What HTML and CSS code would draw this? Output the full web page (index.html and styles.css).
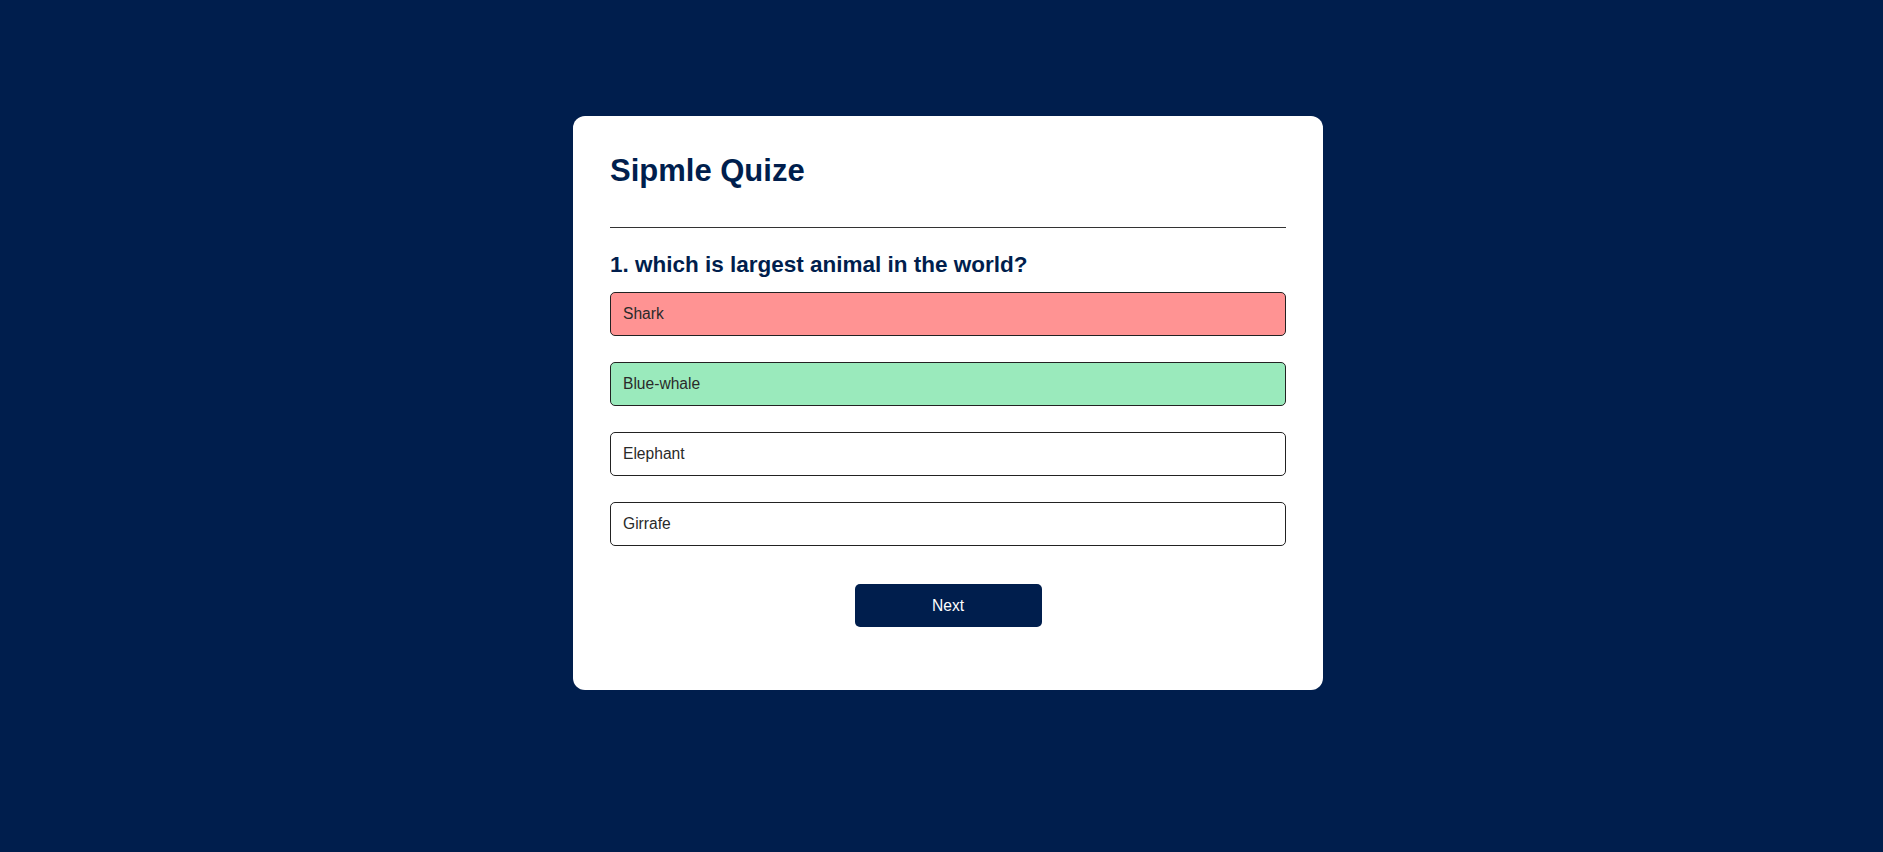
FILE: index.html
```html
<!DOCTYPE html>
<html lang="en">
<head>
<meta charset="utf-8">
<title>Simple Quiz</title>
<link rel="stylesheet" href="styles.css">
</head>
<body>
  <div class="app">
    <h1 class="title">Sipmle Quize</h1>
    <div class="quiz">
      <h2 class="question">1. which is largest animal in the world?</h2>
      <div class="answers">
        <button class="btn incorrect">Shark</button>
        <button class="btn correct">Blue-whale</button>
        <button class="btn">Elephant</button>
        <button class="btn">Girrafe</button>
      </div>
      <button class="next-btn">Next</button>
    </div>
  </div>
</body>
</html>
```
FILE: styles.css
```css
* {
  margin: 0;
  padding: 0;
  box-sizing: border-box;
  font-family: "Liberation Sans", Arial, sans-serif;
}

body {
  background: #001e4d;
  height: 852px;
  overflow: hidden;
  padding-left: 13px;
}

.app {
  background: #fff;
  width: 750px;
  margin: 116px auto 0;
  border-radius: 12px;
  padding: 37px 37px 63px 37px;
  display: flex;
  flex-direction: column;
}

.title {
  font-size: 31px;
  line-height: 36px;
  font-weight: 700;
  color: #001e4d;
  border-bottom: 1px solid #333;
  padding-bottom: 38px;
}

.quiz {
  padding-top: 24px;
  display: flex;
  flex-direction: column;
}

.question {
  font-size: 22.5px;
  line-height: 26px;
  font-weight: 700;
  color: #001e4d;
  margin-bottom: 14px;
}

.answers {
  display: flex;
  flex-direction: column;
  gap: 26px;
}

.btn {
  display: flex;
  align-items: center;
  height: 44px;
  width: 100%;
  background: #fff;
  color: #2a2a2a;
  font-size: 15.6px;
  text-align: left;
  border: 1px solid #222;
  border-radius: 5px;
  padding: 0 12px;
  cursor: pointer;
}

.btn.correct {
  background: #9aeabc;
}

.btn.incorrect {
  background: #ff9393;
}

.next-btn {
  align-self: center;
  width: 187px;
  height: 43px;
  margin-top: 38px;
  background: #001e4d;
  color: #fff;
  font-size: 15.6px;
  border: 0;
  border-radius: 5px;
  cursor: pointer;
}
```
